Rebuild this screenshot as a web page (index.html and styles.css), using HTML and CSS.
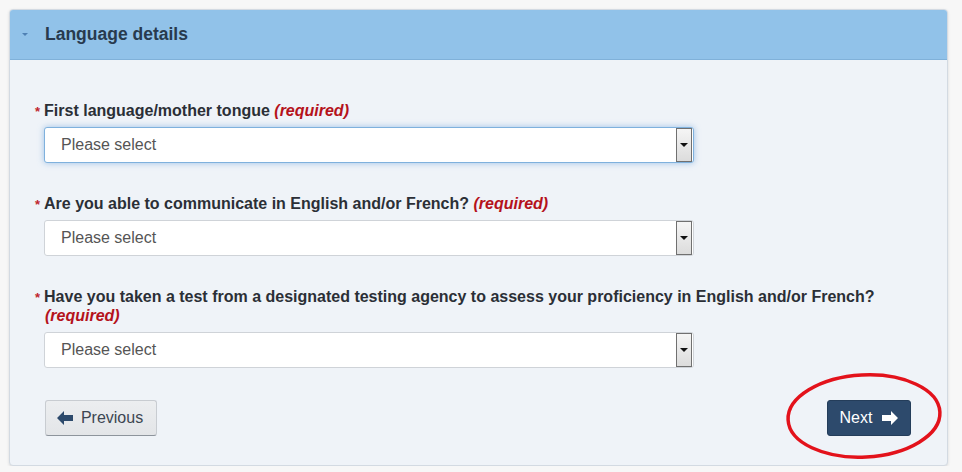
FILE: index.html
```html
<!DOCTYPE html>
<html lang="en">
<head>
    <meta charset="UTF-8">
    <title>Language details</title>
    <link rel="stylesheet" href="styles.css">
</head>
<body>
    <div class="panel">
        <div class="panel-heading">
            <span class="caret"></span>
            Language details
        </div>

        <div class="panel-body">
            <div class="field">
                <label class="label"><span class="star">*</span>First language/mother tongue <em>(required)</em></label>
                <div class="select focused">
                    <span>Please select</span>
                    <span class="select-btn"><span class="tri"></span></span>
                </div>
            </div>

            <div class="field">
                <label class="label"><span class="star">*</span>Are you able to communicate in English and/or French? <em>(required)</em></label>
                <div class="select">
                    <span>Please select</span>
                    <span class="select-btn"><span class="tri"></span></span>
                </div>
            </div>

            <div class="field">
                <label class="label"><span class="star">*</span>Have you taken a test from a designated testing agency to assess your proficiency in English and/or French?<br><em>(required)</em></label>
                <div class="select">
                    <span>Please select</span>
                    <span class="select-btn"><span class="tri"></span></span>
                </div>
            </div>

            <div class="actions">
                <button class="btn btn-prev">
                    <svg width="16" height="14" viewBox="0 0 16 14"><path d="M0 7 L7 0 L7 4 L16 4 L16 10 L7 10 L7 14 Z" fill="#2d4a6c"/></svg>
                    Previous
                </button>
                <button class="btn btn-next">
                    Next
                    <svg width="16" height="14" viewBox="0 0 16 14"><path d="M16 7 L9 0 L9 4 L0 4 L0 10 L9 10 L9 14 Z" fill="#fff"/></svg>
                </button>
            </div>

            <!-- hand drawn highlight round the Next button -->
            <svg class="circle" width="164" height="92" viewBox="0 0 164 92">
                <ellipse cx="81" cy="45" rx="76" ry="41" transform="rotate(-3 81 45)" fill="none" stroke="#e3121b" stroke-width="3.5"/>
            </svg>
        </div>
    </div>
</body>
</html>
```

FILE: styles.css
```css
body {
    margin: 0;
    background-color: #f7f7f7;
    font-family: 'Liberation Sans', Arial, sans-serif;
}
.panel {
    margin: 9px 0 0 9px;
    width: 937px;
    border: 1px solid #d3dae2;
    border-radius: 4px;
    background-color: #eff3f8;
    box-shadow: 0 1px 3px rgba(0, 0, 0, 0.12);
    overflow: hidden;
}
.panel-heading {
    height: 49px;
    background-color: #91c2e9;
    border-bottom: 1px solid #80b1d9;
    display: flex;
    align-items: center;
    padding-left: 12px;
    font-size: 17.5px;
    font-weight: bold;
    color: #283a4e;
}
.caret {
    width: 0;
    height: 0;
    border-left: 3px solid transparent;
    border-right: 3px solid transparent;
    border-top: 3px solid #4f80b3;
    margin-right: 17px;
}
.panel-body {
    position: relative;
    padding: 41px 25px 29px 25px;
}
.field {
    margin-bottom: 31px;
}
.label {
    display: block;
    font-size: 16px;
    line-height: 19px;
    font-weight: bold;
    color: #2b2f36;
    margin-bottom: 7px;
}
.label em {
    color: #b5121b;
}
.star {
    color: #c0262d;
    font-size: 13px;
    line-height: 0;
    margin-right: 4px;
}
.label br + em {
    margin-left: 10px;
}
.select {
    margin-left: 9px;
    width: 632px;
    height: 34px;
    border: 1px solid #cfd3d8;
    border-radius: 3px;
    background-color: #fff;
    display: flex;
    align-items: center;
    justify-content: space-between;
    padding-left: 16px;
    font-size: 16px;
    color: #555;
}
.select.focused {
    border-color: #7fb1dd;
    box-shadow: 0 0 6px rgba(102, 160, 220, 0.6);
}
.select-btn {
    width: 14px;
    height: 32px;
    margin-right: 1px;
    border: 1px solid #707070;
    background: linear-gradient(#f5f5f5, #dcdcdc);
    display: flex;
    align-items: center;
    justify-content: center;
}
.tri {
    width: 0;
    height: 0;
    border-left: 4px solid transparent;
    border-right: 4px solid transparent;
    border-top: 4px solid #111;
}
.actions {
    display: flex;
    justify-content: space-between;
    margin: 0 11px 0 10px;
    padding-top: 1px;
}
.btn {
    height: 36px;
    border-radius: 3px;
    font-family: 'Liberation Sans', Arial, sans-serif;
    font-size: 16px;
    display: flex;
    align-items: center;
    gap: 8px;
    cursor: pointer;
}
.btn-prev {
    width: 112px;
    justify-content: center;
    background: linear-gradient(#eceef0, #e3e5e8);
    border: 1px solid #c8ccd1;
    border-bottom-color: #8d949c;
    color: #3c4652;
    padding: 0 10px 0 8px;
}
.btn-next {
    width: 84px;
    justify-content: center;
    background-color: #2d4a6c;
    border: 1px solid #243d5a;
    color: #fff;
    gap: 10px;
}
.circle {
    position: absolute;
    left: 773px;
    top: 311px;
}
```
